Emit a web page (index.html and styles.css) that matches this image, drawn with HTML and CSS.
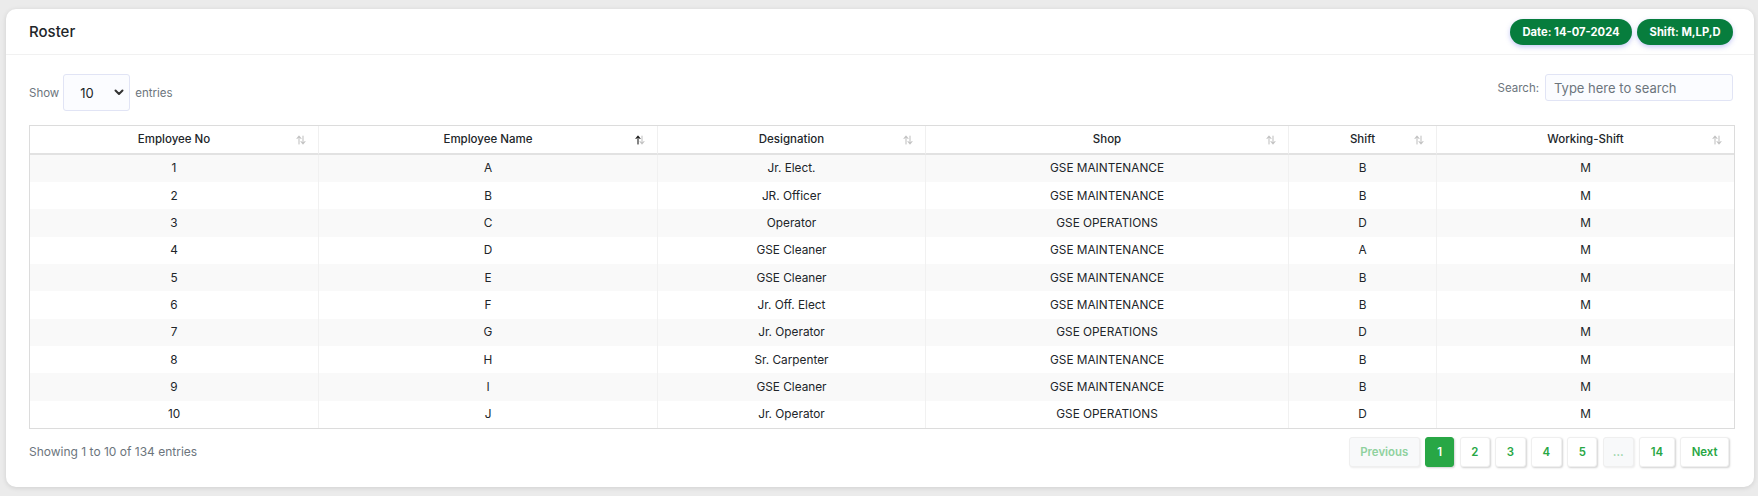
FILE: index.html
```html
<!DOCTYPE html>
<html lang="en">
<head>
<meta charset="utf-8">
<title>Roster</title>
<link rel="stylesheet" href="styles.css">
</head>
<body>
<div class="card">
  <div class="card-header">
    <h1 class="title">Roster</h1>
    <div class="badges">
      <span class="badge">Date: 14-07-2024</span>
      <span class="badge">Shift: M,LP,D</span>
    </div>
  </div>
  <div class="card-body">
    <div class="controls">
      <label class="length">Show
        <span class="select">10
          <svg class="chev" width="10" height="7" viewBox="0 0 10 7"><path d="M1.5 1.5 L5 5 L8.5 1.5" fill="none" stroke="#333" stroke-width="2" stroke-linecap="round" stroke-linejoin="round"/></svg>
        </span>
        entries</label>
      <label class="search">Search:
        <span class="input">Type here to search</span>
      </label>
    </div>
    <table class="grid">
      <colgroup>
        <col style="width:288px"><col style="width:339px"><col style="width:268px"><col style="width:363px"><col style="width:148px"><col style="width:298px">
      </colgroup>
      <thead>
        <tr>
          <th>Employee No<svg class="sort" width="10" height="10" viewBox="0 0 10 10"><path class="up" d="M3 9V1.5M1 3.5L3 1.2 5 3.5"/><path class="dn" d="M7 1V8.5M5 6.5L7 8.8 9 6.5"/></svg></th>
          <th>Employee Name<svg class="sort sorted" width="10" height="10" viewBox="0 0 10 10"><path class="up" d="M3 9V1.5M1 3.5L3 1.2 5 3.5"/><path class="dn" d="M7 1V8.5M5 6.5L7 8.8 9 6.5"/></svg></th>
          <th>Designation<svg class="sort" width="10" height="10" viewBox="0 0 10 10"><path class="up" d="M3 9V1.5M1 3.5L3 1.2 5 3.5"/><path class="dn" d="M7 1V8.5M5 6.5L7 8.8 9 6.5"/></svg></th>
          <th>Shop<svg class="sort" width="10" height="10" viewBox="0 0 10 10"><path class="up" d="M3 9V1.5M1 3.5L3 1.2 5 3.5"/><path class="dn" d="M7 1V8.5M5 6.5L7 8.8 9 6.5"/></svg></th>
          <th>Shift<svg class="sort" width="10" height="10" viewBox="0 0 10 10"><path class="up" d="M3 9V1.5M1 3.5L3 1.2 5 3.5"/><path class="dn" d="M7 1V8.5M5 6.5L7 8.8 9 6.5"/></svg></th>
          <th>Working-Shift<svg class="sort" width="10" height="10" viewBox="0 0 10 10"><path class="up" d="M3 9V1.5M1 3.5L3 1.2 5 3.5"/><path class="dn" d="M7 1V8.5M5 6.5L7 8.8 9 6.5"/></svg></th>
        </tr>
      </thead>
      <tbody>
        <tr><td>1</td><td>A</td><td>Jr. Elect.</td><td>GSE MAINTENANCE</td><td>B</td><td>M</td></tr>
        <tr><td>2</td><td>B</td><td>JR. Officer</td><td>GSE MAINTENANCE</td><td>B</td><td>M</td></tr>
        <tr><td>3</td><td>C</td><td>Operator</td><td>GSE OPERATIONS</td><td>D</td><td>M</td></tr>
        <tr><td>4</td><td>D</td><td>GSE Cleaner</td><td>GSE MAINTENANCE</td><td>A</td><td>M</td></tr>
        <tr><td>5</td><td>E</td><td>GSE Cleaner</td><td>GSE MAINTENANCE</td><td>B</td><td>M</td></tr>
        <tr><td>6</td><td>F</td><td>Jr. Off. Elect</td><td>GSE MAINTENANCE</td><td>B</td><td>M</td></tr>
        <tr><td>7</td><td>G</td><td>Jr. Operator</td><td>GSE OPERATIONS</td><td>D</td><td>M</td></tr>
        <tr><td>8</td><td>H</td><td>Sr. Carpenter</td><td>GSE MAINTENANCE</td><td>B</td><td>M</td></tr>
        <tr><td>9</td><td>I</td><td>GSE Cleaner</td><td>GSE MAINTENANCE</td><td>B</td><td>M</td></tr>
        <tr><td>10</td><td>J</td><td>Jr. Operator</td><td>GSE OPERATIONS</td><td>D</td><td>M</td></tr>
      </tbody>
    </table>
    <div class="footer">
      <div class="info">Showing 1 to 10 of 134 entries</div>
      <div class="pager">
        <span class="pg disabled">Previous</span>
        <span class="pg active">1</span>
        <span class="pg">2</span>
        <span class="pg">3</span>
        <span class="pg">4</span>
        <span class="pg">5</span>
        <span class="pg ellipsis">…</span>
        <span class="pg">14</span>
        <span class="pg">Next</span>
      </div>
    </div>
  </div>
</div>
</body>
</html>
```

FILE: styles.css
```css
* { box-sizing: border-box; }
html, body { height: 100%; }
body {
  margin: 0;
  padding: 9px 4px 0 6px;
  background: #ebebeb;
  font-family: Inter, "Noto Sans", sans-serif;
  color: #212529;
}
.card {
  background: #fff;
  border-radius: 10px;
  box-shadow: 0 1px 5px rgba(0,0,0,0.12);
  height: 478px;
}
.card-header {
  height: 46px;
  border-bottom: 1px solid #f1f1f1;
  display: flex;
  align-items: center;
  justify-content: space-between;
  padding: 0 21px 0 23px;
}
.title {
  margin: 0;
  font-size: 15px;
  font-weight: 500;
  color: #212529;
}
.badges { display: flex; gap: 5px; margin-top: 1px; }
.badge {
  display: inline-flex;
  align-items: center;
  height: 26px;
  padding: 0 12.5px;
  border-radius: 13px;
  background: #077d3d;
  color: #fff;
  font-size: 11.2px;
  font-weight: 700;
  box-shadow: 0 2px 5px rgba(90,100,230,0.35);
}
.card-body { padding: 19px 21px 0 23px; }
.controls {
  display: flex;
  justify-content: space-between;
  align-items: flex-start;
}
.length, .search {
  display: flex;
  align-items: center;
  font-size: 11.5px;
  color: #6c757d;
}
.select {
  display: inline-flex;
  align-items: center;
  justify-content: space-between;
  width: 67px;
  height: 37px;
  margin: 0 5px 0 4px;
  padding: 0 5px 0 16px;
  border: 1px solid #e1e4f5;
  border-radius: 3px;
  background: #fbfcff;
  color: #212529;
  font-size: 13px;
}
.chev { display: block; }
.input {
  display: inline-flex;
  align-items: center;
  width: 188px;
  height: 27px;
  margin-left: 6px;
  padding: 0 8px;
  border: 1px solid #e1e4f5;
  border-radius: 3px;
  background: #fbfcff;
  color: #6c757d;
  font-size: 13px;
}
.grid {
  margin-top: 14px;
  width: 1704px;
  table-layout: fixed;
  border-collapse: separate;
  border-spacing: 0;
  border: 1px solid #dcdcdc;
  font-size: 11.8px;
}
.grid th {
  position: relative;
  height: 28.5px;
  padding: 0 20px;
  font-size: 11.5px;
  font-weight: 500;
  color: #212529;
  text-align: center;
  border-left: 1px solid #f0f0f0;
  border-bottom: 2px solid #e2e2e2;
}
.grid th:first-child, .grid td:first-child { border-left: 0; }
.grid td {
  height: 27.35px;
  padding: 0 10px;
  text-align: center;
  border-left: 1px solid #f1f1f1;
  color: #212529;
}
.grid tbody tr:nth-child(odd) td { background: #f9f9f9; }
.sort {
  position: absolute;
  right: 12px;
  top: 9px;
}
.sort path { fill: none; stroke-width: 1.1; stroke-linecap: round; stroke-linejoin: round; }
.sort .up, .sort .dn { stroke: #c4c4c4; }
.sort.sorted .up { stroke: #222; }
.footer {
  margin-top: 8px;
  display: flex;
  justify-content: space-between;
  align-items: center;
}
.info { font-size: 12px; color: #6c757d; }
.pager { display: flex; gap: 5.5px; margin-right: 4px; }
.pg {
  display: inline-flex;
  align-items: center;
  justify-content: center;
  height: 30px;
  min-width: 29px;
  padding: 0 10.5px;
  border: 1px solid #efefef;
  border-radius: 3px;
  background: #fff;
  color: #28a745;
  font-size: 11.4px;
  font-weight: 600;
  box-shadow: 1px 1px 2px rgba(0,0,0,0.18);
}
.pg.active { background: #28a745; color: #fff; border-color: #28a745; }
.pg.disabled { background: #f8f9fa; color: #8fd19e; box-shadow: 1px 1px 2px rgba(0,0,0,0.08); }
.pg.ellipsis { background: #f8f9fa; color: #8fd19e; padding: 0 9px; box-shadow: 1px 1px 2px rgba(0,0,0,0.08); }
```
